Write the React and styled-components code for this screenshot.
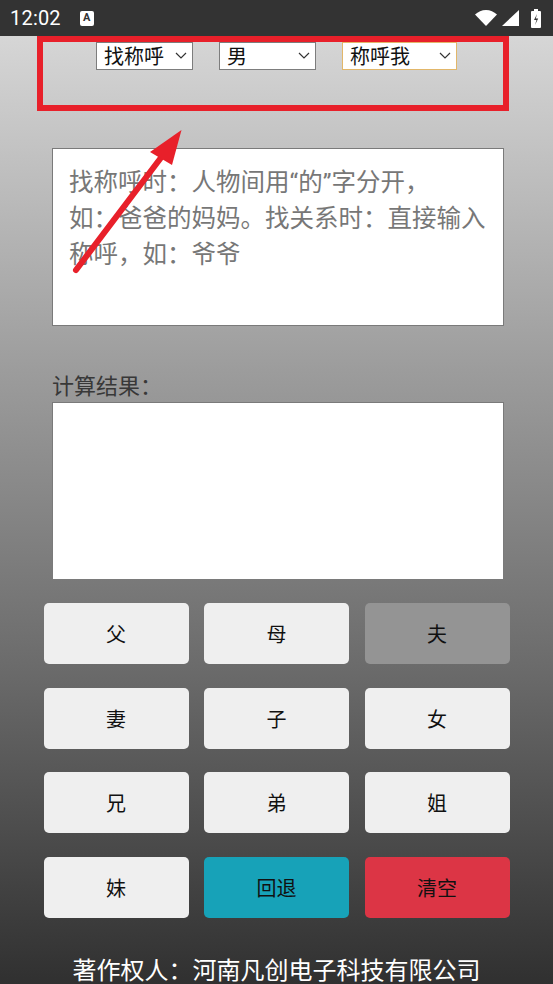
import React from 'react';
import styled, { createGlobalStyle } from 'styled-components';

const GlobalStyle = createGlobalStyle`
  html, body {
    margin: 0;
    padding: 0;
  }
  body {
    font-family: "Noto Sans CJK SC", "Noto Sans", sans-serif;
  }
`;

const BUTTONS = [
  { label: '父' },
  { label: '母' },
  { label: '夫', tone: 'muted' },
  { label: '妻' },
  { label: '子' },
  { label: '女' },
  { label: '兄' },
  { label: '弟' },
  { label: '姐' },
  { label: '妹' },
  { label: '回退', tone: 'info' },
  { label: '清空', tone: 'danger' },
];

const TONES = {
  light: '#efefef',
  muted: '#949494',
  info: '#17a2b8',
  danger: '#dc3545',
};

const HINT = '找称呼时：人物间用“的”字分开，\n如：爸爸的妈妈。找关系时：直接输入称呼，如：爷爷';

function Chevron() {
  return (
    <svg width="12" height="7" viewBox="0 0 12 7" fill="none">
      <path d="M1 1l5 5 5-5" stroke="#333" strokeWidth="1.2" />
    </svg>
  );
}

function Dropdown({ width, value, options, focused }) {
  return (
    <SelectWrap $width={width}>
      <Select defaultValue={value} $focused={focused}>
        {options.map((o) => (
          <option key={o}>{o}</option>
        ))}
      </Select>
      <ChevronSlot>
        <Chevron />
      </ChevronSlot>
    </SelectWrap>
  );
}

export default function App() {
  return (
    <Screen>
      <GlobalStyle />
      <StatusBar>
        <StatusLeft>
          <Clock>12:02</Clock>
          <NoteBadge>A</NoteBadge>
        </StatusLeft>
        <StatusIcons>
          <svg width="22" height="16" viewBox="0 0 22 16">
            <path d="M11 16L0 4.5C3 1.8 6.8 0 11 0s8 1.8 11 4.5z" fill="#fff" />
          </svg>
          <svg width="17" height="16" viewBox="0 0 17 16">
            <path d="M17 0v16H0z" fill="#fff" />
          </svg>
          <svg width="10" height="19" viewBox="0 0 10 19">
            <rect x="3" y="0" width="4" height="2" fill="#fff" />
            <rect x="0" y="2" width="10" height="17" rx="1" fill="#fff" />
            <path d="M6 5L3 11h2.5L4 16l3.2-6.5H4.8z" fill="#333" />
          </svg>
        </StatusIcons>
      </StatusBar>

      <Main>
        <SelectRow>
          <Dropdown width={97} value="找称呼" options={['找称呼', '找关系']} />
          <Dropdown width={97} value="男" options={['男', '女']} />
          <Dropdown width={115} value="称呼我" options={['称呼我', '我称呼']} focused />
        </SelectRow>

        <InputArea placeholder={HINT} />

        <ResultBlock>
          <ResultLabel>计算结果：</ResultLabel>
          <ResultArea readOnly />
        </ResultBlock>

        <Keypad>
          {BUTTONS.map((b) => (
            <Key key={b.label} $tone={b.tone || 'light'}>
              {b.label}
            </Key>
          ))}
        </Keypad>

        <Footer>著作权人：河南凡创电子科技有限公司</Footer>
      </Main>

      <Highlight />
      <Pointer width="553" height="984" viewBox="0 0 553 984">
        <line x1="76" y1="270" x2="163" y2="155" stroke="#e8202a" strokeWidth="6" strokeLinecap="round" />
        <path d="M181.5 130L150 152L172 165z" fill="#e8202a" />
      </Pointer>
    </Screen>
  );
}

const Screen = styled.div`
  position: relative;
  width: 553px;
  height: 984px;
  overflow: hidden;
  display: flex;
  flex-direction: column;
`;

const StatusBar = styled.div`
  height: 36px;
  flex: none;
  background: #333333;
  display: flex;
  align-items: center;
  justify-content: space-between;
  padding: 0 12px 0 10px;
  box-sizing: border-box;
`;

const StatusLeft = styled.div`
  display: flex;
  align-items: center;
  gap: 19px;
`;

const Clock = styled.span`
  font-family: Roboto, "Liberation Sans", sans-serif;
  font-size: 20px;
  color: #ffffff;
  letter-spacing: 0.2px;
`;

const NoteBadge = styled.span`
  width: 14px;
  height: 15px;
  background: #ffffff;
  border-radius: 2px;
  color: #333;
  font-family: Roboto, "Liberation Sans", sans-serif;
  font-size: 11px;
  font-weight: 700;
  line-height: 13px;
  text-align: center;
`;

const StatusIcons = styled.div`
  display: flex;
  align-items: center;
  gap: 5px;

  svg:last-child {
    margin-left: 7px;
  }
`;

const Main = styled.main`
  flex: 1;
  display: flex;
  flex-direction: column;
  align-items: center;
  background: linear-gradient(to bottom, #d6d6d6 0%, #9b9b9b 36%, #6c6c6c 66%, #303030 100%);
`;

const SelectRow = styled.div`
  display: flex;
  justify-content: center;
  gap: 26px;
  margin-top: 6px;
  height: 28px;
`;

const SelectWrap = styled.div`
  position: relative;
  width: ${(p) => p.$width}px;
  height: 28px;
`;

const Select = styled.select`
  appearance: none;
  width: 100%;
  height: 100%;
  margin: 0;
  padding: 0 24px 0 7px;
  border: 1px solid ${(p) => (p.$focused ? '#e2b76a' : '#7d7d7d')};
  border-radius: 0;
  background: #ffffff;
  color: #111;
  font-family: "Noto Sans CJK SC", sans-serif;
  font-size: 20px;
  line-height: 26px;
  outline: none;
`;

const ChevronSlot = styled.span`
  position: absolute;
  right: 6px;
  top: 10px;
  display: flex;
  pointer-events: none;
`;

const InputArea = styled.textarea`
  margin: 78px 0 0 3px;
  width: 452px;
  height: 178px;
  box-sizing: border-box;
  padding: 16px 12px 0 16px;
  border: 1px solid #7a7a7a;
  background: #ffffff;
  resize: none;
  font-family: Roboto, "Noto Sans CJK SC", sans-serif;
  font-size: 24.5px;
  line-height: 36px;
  color: #333;
  outline: none;

  &::placeholder {
    color: #777777;
  }
`;

const ResultBlock = styled.div`
  width: 452px;
  display: flex;
  flex-direction: column;
  margin: 43px 0 0 3px;
`;

const ResultLabel = styled.label`
  font-size: 22px;
  line-height: 30px;
  color: #383838;
  margin-bottom: 3px;
`;

const ResultArea = styled.textarea`
  width: 452px;
  height: 178px;
  box-sizing: border-box;
  border: 1px solid #7a7a7a;
  background: #ffffff;
  resize: none;
  outline: none;
`;

const Keypad = styled.div`
  margin-top: 23px;
  display: grid;
  grid-template-columns: repeat(3, 145px);
  grid-auto-rows: 61px;
  column-gap: 15.5px;
  row-gap: 23.5px;
`;

const Key = styled.button`
  border: none;
  border-radius: 5px;
  background: ${(p) => TONES[p.$tone]};
  color: #111;
  font-family: "Noto Sans CJK SC", sans-serif;
  font-size: 20px;
  padding: 0;
`;

const Footer = styled.div`
  margin-top: 38px;
  font-size: 24px;
  line-height: 25px;
  color: #ffffff;
  text-align: center;
`;

const Highlight = styled.div`
  position: absolute;
  left: 37px;
  top: 36px;
  width: 472px;
  height: 75px;
  box-sizing: border-box;
  border: 6px solid #e8202a;
  pointer-events: none;
`;

const Pointer = styled.svg`
  position: absolute;
  left: 0;
  top: 0;
  pointer-events: none;
`;
